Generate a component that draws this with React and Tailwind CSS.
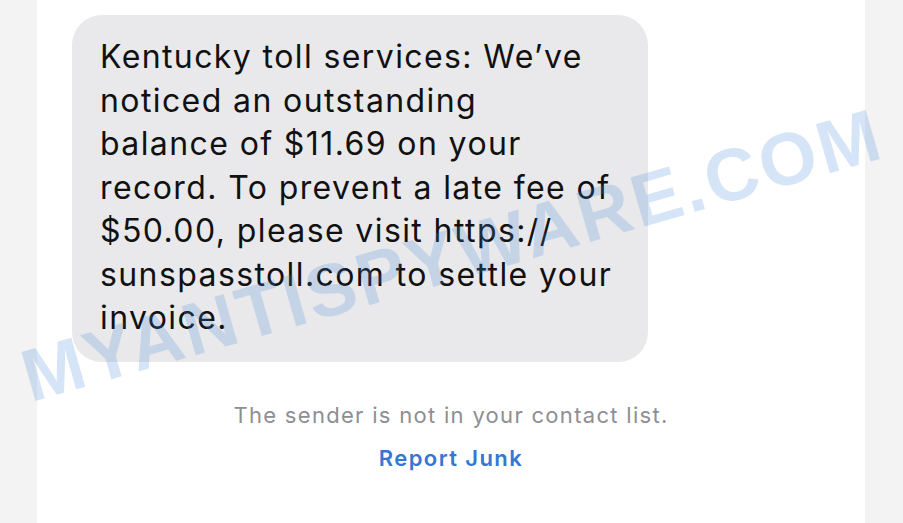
import React from 'react';

const LINES = [
  'Kentucky toll services: We’ve',
  'noticed an outstanding',
  'balance of $11.69 on your',
  'record. To prevent a late fee of',
  '$50.00, please visit https://',
  'sunspasstoll.com to settle your',
  'invoice.',
];

const App = () => {
  return (
    <div className="relative flex h-[523px] w-full overflow-hidden bg-white" style={{ fontFamily: 'Inter, "Liberation Sans", sans-serif' }}>
      {/* side strips */}
      <div className="w-[37px] shrink-0 bg-[#f3f3f3]" />

      <div className="flex flex-1 flex-col bg-white pt-[15px]">
        {/* message bubble */}
        <div className="ml-[35px] w-[576px] rounded-[30px] bg-[#e9e9eb] pl-[28px] pt-[20px] pb-[22px]">
          <p className="text-[32px] leading-[43.5px] tracking-[1.4px] text-[#111111]">
            {LINES.map((line, i) => (
              <span key={i} className="block whitespace-nowrap">{line}</span>
            ))}
          </p>
        </div>

        {/* footer notice */}
        <p className="mt-[39px] text-center text-[22px] leading-[28px] tracking-[1.3px] text-[#8e8e93]">
          The sender is not in your contact list.
        </p>
        <p className="mt-[15px] text-center text-[22px] font-semibold leading-[28px] tracking-[1.4px] text-[#3478d4]">
          Report Junk
        </p>
      </div>

      <div className="w-[38px] shrink-0 bg-[#f3f3f3]" />

      {/* watermark */}
      <div
        className="pointer-events-none absolute left-1/2 top-[255px] -translate-x-1/2 -translate-y-1/2 -rotate-[16deg] whitespace-nowrap text-[74px] font-black tracking-[3px] text-[rgba(70,130,220,0.22)]"
        style={{ fontFamily: '"Liberation Sans", Arial, sans-serif' }}
      >
        MYANTISPYWARE.COM
      </div>
    </div>
  );
};

export default App;
